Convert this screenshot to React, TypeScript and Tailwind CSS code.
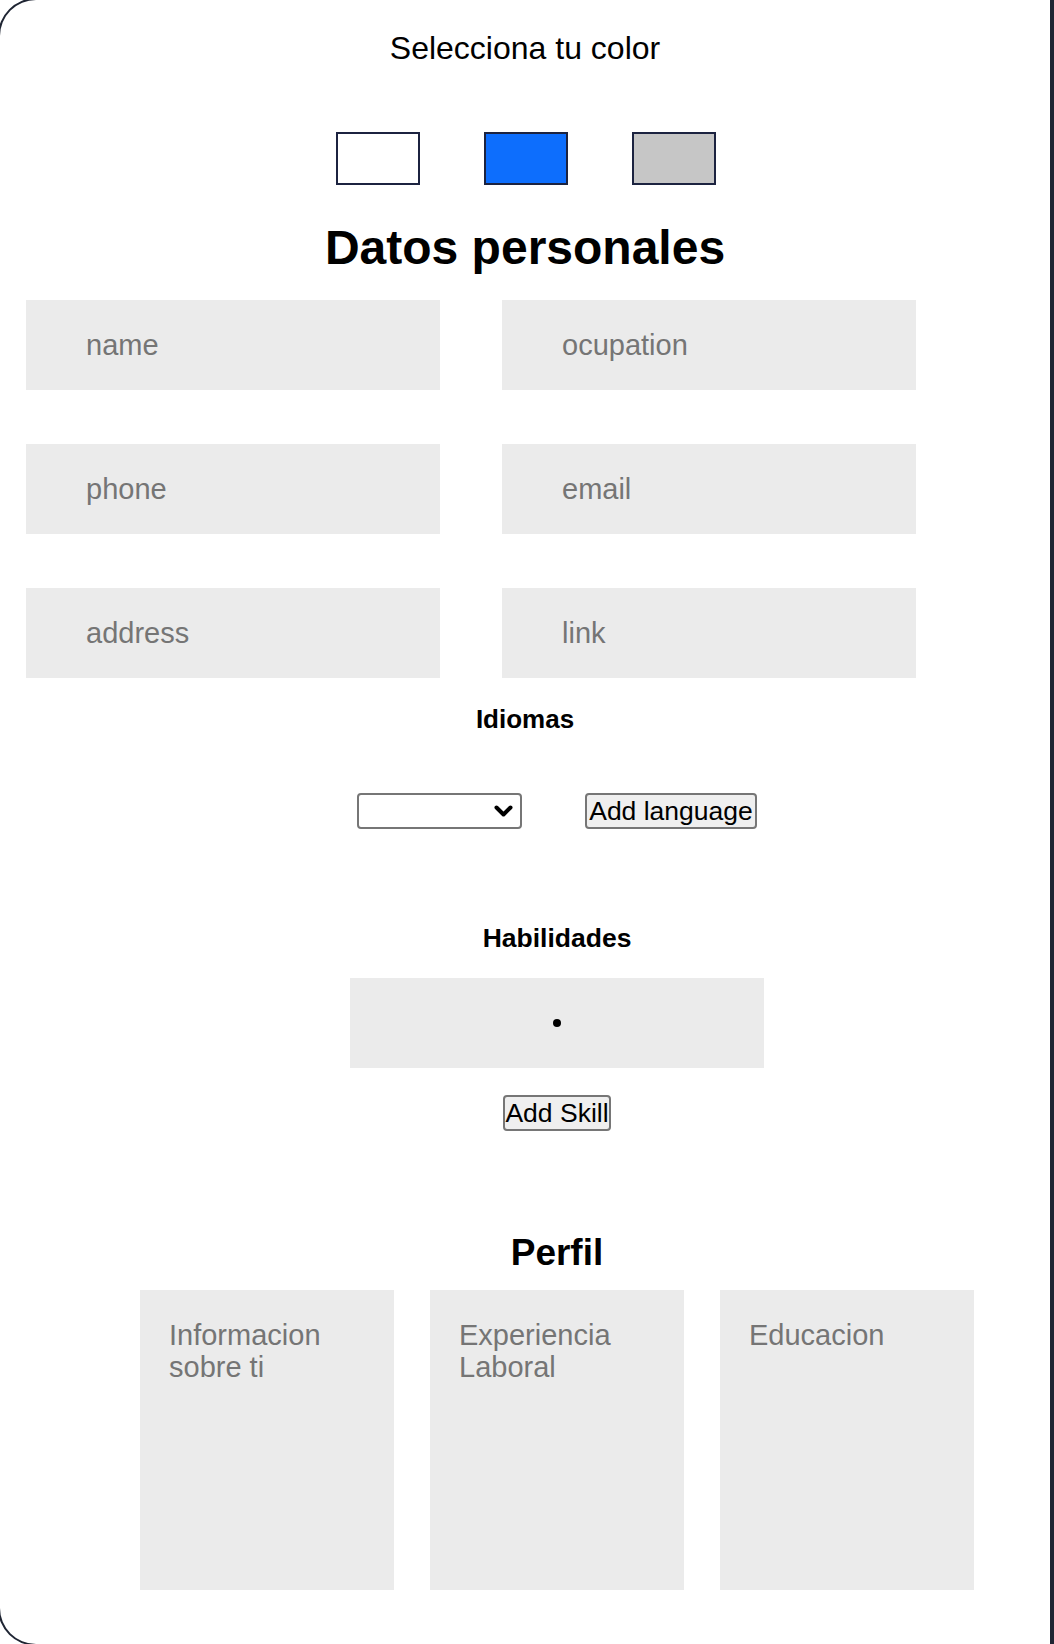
import React from 'react';

const swatches = ['bg-white', 'bg-[#0d6efd]', 'bg-[#c6c6c6]'];

const fields = ['name', 'ocupation', 'phone', 'email', 'address', 'link'];

const profileBoxes = ['Informacion sobre ti', 'Experiencia Laboral', 'Educacion'];

const App: React.FC = () => {
  return (
    <div className="min-h-screen bg-white font-['Liberation_Sans',Arial,sans-serif] text-black overflow-hidden">
      <div className="-mt-[2px] -ml-[2px] w-[1056px] rounded-l-[38px] border-2 border-r-4 border-[#1f2533] bg-white pt-[30px] pb-[54px]">
        <p className="text-center text-[32px] leading-[36px]">Selecciona tu color</p>

        <div className="mt-[66px] ml-[2px] flex justify-center gap-[64px]">
          {swatches.map((c) => (
            <button key={c} className={`h-[53px] w-[84px] border-2 border-[#1c2340] ${c}`} aria-label="color" />
          ))}
        </div>

        <h1 className="mt-[35px] text-center text-[48px] font-bold leading-[56px]">Datos personales</h1>

        <div className="mt-[24px] ml-[26px] grid w-[890px] grid-cols-2 gap-x-[62px] gap-y-[54px]">
          {fields.map((f) => (
            <input
              key={f}
              placeholder={f}
              className="h-[90px] w-[414px] bg-[#ebebeb] pl-[60px] text-[29px] outline-none placeholder:text-[#757575]"
            />
          ))}
        </div>

        <h3 className="mt-[26px] text-center text-[26px] font-bold leading-[30px]">Idiomas</h3>

        <div className="ml-[64px]">
          <div className="mt-[59px] flex justify-center gap-[63px]">
            <div className="relative h-[36px] w-[165px]">
              <select className="h-full w-full appearance-none rounded-[4px] border-2 border-[#767676] bg-white text-[26px]">
                <option value=""></option>
              </select>
              <svg
                className="pointer-events-none absolute right-[9px] top-[12px] h-[12px] w-[19px]"
                viewBox="0 0 19 12"
                fill="none"
                stroke="black"
                strokeWidth="4"
                strokeLinecap="round"
                strokeLinejoin="round"
              >
                <path d="M2.5 2.5l7 7 7-7" />
              </svg>
            </div>
            <button className="h-[36px] w-[172px] rounded-[4px] border-2 border-[#767676] bg-[#efefef] text-[26.5px] leading-none">
              Add language
            </button>
          </div>

          <h3 className="mt-[94px] text-center text-[26.5px] font-bold leading-[30px]">Habilidades</h3>

          <div className="mx-auto mt-[25px] flex h-[90px] w-[414px] items-center justify-center bg-[#ebebeb]">
            <ul>
              <li className="h-[8px] w-[8px] rounded-full bg-black" />
            </ul>
          </div>

          <div className="mt-[27px] flex justify-center">
            <button className="h-[36px] w-[108px] rounded-[4px] border-2 border-[#767676] bg-[#efefef] text-[26.5px] leading-none">
              Add Skill
            </button>
          </div>

          <h2 className="mt-[101px] text-center text-[37px] font-bold leading-[42px]">Perfil</h2>

          <div className="mt-[16px] flex justify-center gap-[36px]">
            {profileBoxes.map((p) => (
              <textarea
                key={p}
                placeholder={p}
                className="h-[300px] w-[254px] resize-none bg-[#ebebeb] pl-[29px] pr-[20px] pt-[29px] text-[29px] leading-[32px] outline-none placeholder:text-[#757575]"
              />
            ))}
          </div>
        </div>
      </div>
    </div>
  );
};

export default App;
